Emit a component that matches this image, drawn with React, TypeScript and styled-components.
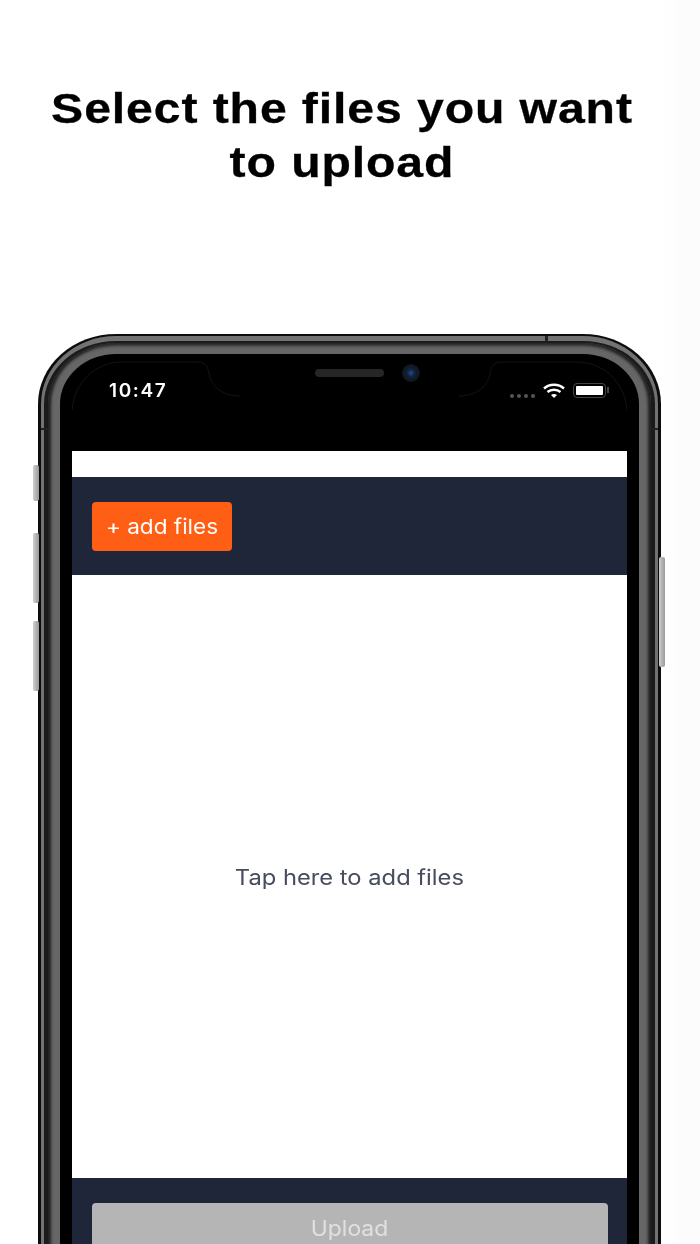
import styled, { createGlobalStyle } from 'styled-components'

const GlobalStyle = createGlobalStyle`
  html, body {
    margin: 0;
    height: 1244px;
    overflow: hidden;
    background: #fff;
  }
  * { box-sizing: border-box; }
`

const Page = styled.div`
  width: 700px;
  height: 1244px;
  overflow: hidden;
  padding: 80px 38px 0;
  font-family: "Inter", "Liberation Sans", sans-serif;
  background: linear-gradient(to right, #fff 0, #fff 660px, #fcfcfc 680px, #fcfcfc 100%);
  filter: blur(0.7px);
`

const Title = styled.h1`
  margin: 0 8px 127px -8px;
  height: 127px;
  padding-top: 1px;
  font-family: "Liberation Sans", Arial, sans-serif;
  font-size: 43px;
  font-weight: 700;
  line-height: 54px;
  letter-spacing: 0.8px;
  text-align: center;
  color: #000;
  -webkit-text-stroke: 0.3px #000;
  transform: scaleX(1.12);
`

const Stretched = styled.span<{ $x: number }>`
  display: inline-block;
  transform: scaleX(${p => p.$x});
`

const Phone = styled.div`
  position: relative;
  width: 623px;
  height: 1000px;
  padding: 2px 3px 0;
  border-radius: 78px 78px 0 0 / 70px 70px 0 0;
  background: #0c0c0c;
`

const OuterBand = styled.div`
  position: relative;
  height: 100%;
  padding: 5px 3px 0;
  border-radius: 75px 75px 0 0 / 68px 68px 0 0;
  background: #727272;
`

const Groove = styled.div`
  height: 100%;
  padding: 2px 4px 0;
  border-radius: 72px 72px 0 0 / 63px 63px 0 0;
  background: #1b1b1b;
`

const InnerBand = styled.div`
  height: 100%;
  padding: 11px 12px 0;
  border-radius: 68px 68px 0 0 / 61px 61px 0 0;
  background: #666;
  box-shadow: inset 3px 0 3px #222, inset -3px 0 3px #222, inset 0 3px 3px #333;
`

const Glass = styled.div`
  position: relative;
  height: 100%;
  padding: 0 12px;
  border-radius: 56px 56px 0 0 / 50px 50px 0 0;
  background: #000;
`

const StatusBar = styled.div`
  position: relative;
  display: grid;
  grid-template-columns: 206px 1fr auto;
  align-items: center;
  height: 97px;
  padding: 0 19px 24px 37px;
  color: #fff;
`

const Time = styled.span`
  font-size: 19px;
  font-weight: 600;
  letter-spacing: 1.6px;
`

const Sensors = styled.div`
  align-self: start;
  display: flex;
  align-items: center;
  gap: 18px;
  padding-top: 10px;
`

const Speaker = styled.div`
  width: 69px;
  height: 8px;
  border-radius: 4px;
  background: #262626;
`

const Camera = styled.div`
  width: 18px;
  height: 18px;
  border-radius: 50%;
  background: radial-gradient(circle, #1d4f96 0, #12213c 30%, #12151c 65%);
`

const StatusIcons = styled.div`
  display: flex;
  align-items: center;
  gap: 8px;
`

const SignalDots = styled.div`
  display: flex;
  gap: 3px;
  margin-top: 10px;
`

const SignalDot = styled.i`
  width: 4px;
  height: 4px;
  border-radius: 50%;
  background: #555;
`

const Battery = styled.div`
  position: relative;
  width: 33px;
  height: 15px;
  margin-right: 2px;
  padding: 2px;
  border: 1px solid #444;
  border-radius: 4px;

  &::before {
    content: '';
    display: block;
    height: 100%;
    border-radius: 1px;
    background: #fff;
  }

  &::after {
    content: '';
    position: absolute;
    top: 3px;
    right: -4px;
    width: 2px;
    height: 6px;
    background: #444;
  }
`

const EarOutline = styled.svg`
  position: absolute;
  top: 0;
  left: 12px;
  width: 555px;
  height: 60px;
`

const Screen = styled.main`
  height: 840px;
  display: grid;
  grid-template-rows: 26px 98px 603px 113px;
  background: #fff;
`

const Toolbar = styled.div`
  display: flex;
  align-items: center;
  padding: 1px 20px 0;
  background: #20263a;
`

const AddButton = styled.button`
  width: 140px;
  height: 49px;
  padding: 0;
  border: 0;
  border-radius: 4px;
  font-family: inherit;
  font-size: 20.5px;
  color: #fff;
  background: #ff5f15;
`

const DropArea = styled.div`
  display: flex;
  align-items: center;
  justify-content: center;
  padding-top: 2px;
  font-size: 21px;
  color: #474c5e;
  background: #fff;
`

const Footer = styled.div`
  padding: 25px 19px 0 20px;
  background: #20263a;
`

const UploadButton = styled.button`
  width: 100%;
  height: 80px;
  padding: 0 0 30px;
  border: 0;
  border-radius: 4px;
  font-family: inherit;
  font-size: 21px;
  color: #e0e0e0;
  background: #b5b5b5;
`

const KeyColumn = styled.div<{ $right?: boolean }>`
  position: absolute;
  top: ${p => (p.$right ? 223 : 131)}px;
  ${p => (p.$right ? 'right: -4px;' : 'left: -5px;')}
  display: flex;
  flex-direction: column;
  gap: 18px;
`

const SideKey = styled.div<{ $height: number; $first?: boolean }>`
  width: 6px;
  height: ${p => p.$height}px;
  margin-bottom: ${p => (p.$first ? 14 : 0)}px;
  border-radius: 2px;
  background: linear-gradient(to right, #cfcfcf, #999);
`

const BandCut = styled.i<{ $right?: boolean }>`
  position: absolute;
  top: 92px;
  ${p => (p.$right ? 'right: 0;' : 'left: 0;')}
  width: 7px;
  height: 2px;
  background: #222;
`

const TopCut = styled.i`
  position: absolute;
  top: 0;
  left: 504px;
  width: 3px;
  height: 6px;
  background: #222;
`

export default function App() {
  return (
    <>
      <GlobalStyle />
      <Page>
        <Title>
          Select the files you want
          <br />
          to upload
        </Title>
        <Phone>
          <KeyColumn>
            <SideKey $height={36} $first />
            <SideKey $height={70} />
            <SideKey $height={70} />
          </KeyColumn>
          <KeyColumn $right>
            <SideKey $height={110} />
          </KeyColumn>
          <OuterBand>
            <BandCut />
            <BandCut $right />
            <TopCut />
            <Groove>
              <InnerBand>
                <Glass>
                  <EarOutline viewBox="0 0 555 60" fill="none" stroke="#15150f" strokeWidth="1">
                    <path d="M0 56 C2 28 24 8 50 8 H125 C135 8 136 14 137 20 C139 30 148 42 168 42" />
                    <path d="M555 56 C553 28 531 8 505 8 H430 C420 8 419 14 418 20 C416 30 407 42 387 42" />
                  </EarOutline>
                  <StatusBar>
                    <Time>10:47</Time>
                    <Sensors>
                      <Speaker />
                      <Camera />
                    </Sensors>
                    <StatusIcons>
                      <SignalDots>
                        <SignalDot />
                        <SignalDot />
                        <SignalDot />
                        <SignalDot />
                      </SignalDots>
                      <svg width="22" height="16" viewBox="0 0 22 16" fill="none" stroke="#fff" strokeWidth="2.4">
                        <path d="M1 5.5 C6.5 0.5 15.5 0.5 21 5.5" />
                        <path d="M4.5 9 C8 6 14 6 17.5 9" />
                        <path d="M8 12 L11 15 L14 12 C12.5 10.8 9.5 10.8 8 12 Z" fill="#fff" stroke="none" />
                      </svg>
                      <Battery />
                    </StatusIcons>
                  </StatusBar>
                  <Screen>
                    <div />
                    <Toolbar>
                      <AddButton>
                        <Stretched $x={1.1}>+ add files</Stretched>
                      </AddButton>
                    </Toolbar>
                    <DropArea>
                      <Stretched $x={1.13}>Tap here to add files</Stretched>
                    </DropArea>
                    <Footer>
                      <UploadButton>
                        <Stretched $x={1.09}>Upload</Stretched>
                      </UploadButton>
                    </Footer>
                  </Screen>
                </Glass>
              </InnerBand>
            </Groove>
          </OuterBand>
        </Phone>
      </Page>
    </>
  )
}
